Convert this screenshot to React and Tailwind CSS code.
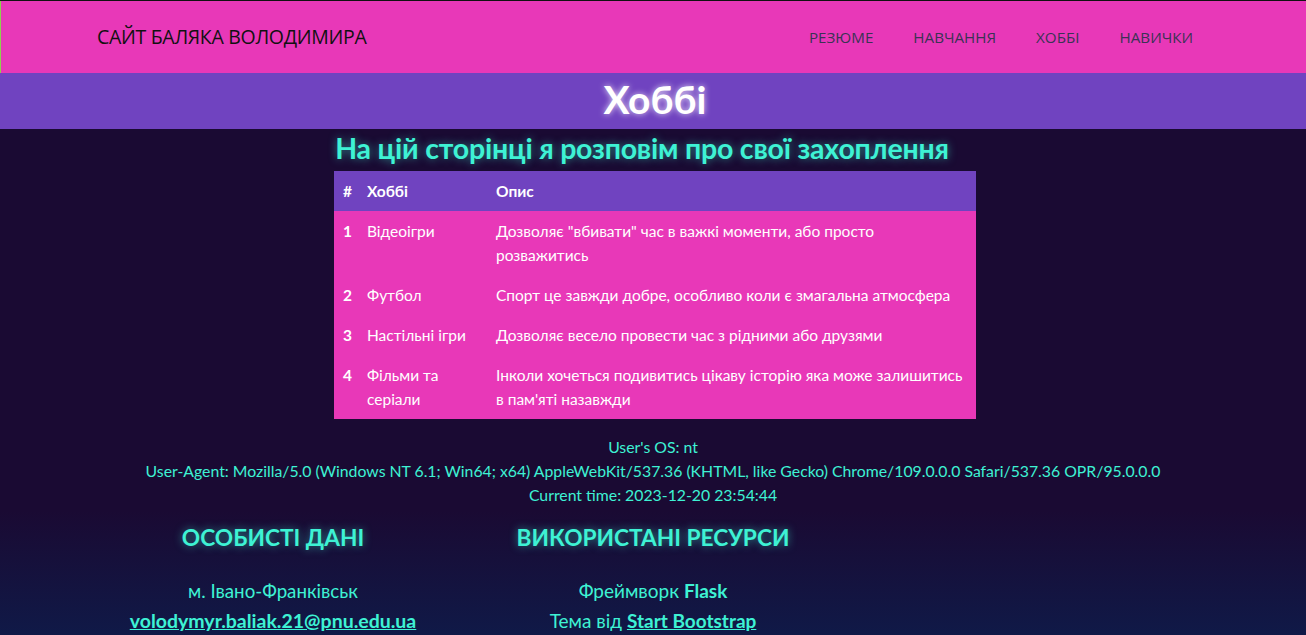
import React from 'react';

const hobbies = [
  { n: 1, name: 'Відеоігри', desc: 'Дозволяє "вбивати" час в важкі моменти, або просто розважитись' },
  { n: 2, name: 'Футбол', desc: 'Спорт це завжди добре, особливо коли є змагальна атмосфера' },
  { n: 3, name: 'Настільні ігри', desc: 'Дозволяє весело провести час з рідними або друзями' },
  { n: 4, name: 'Фільми та серіали', desc: 'Інколи хочеться подивитись цікаву історію яка може залишитись в пам\'яті назавжди' },
];

const navLinks = ['РЕЗЮМЕ', 'НАВЧАННЯ', 'ХОББІ', 'НАВИЧКИ'];

export default function App() {
  return (
    <div className="min-h-screen bg-[linear-gradient(to_bottom,#1a0a33_0px,#1a0a33_510px,#0c1f4f_680px)] font-['Lato',sans-serif] border-t border-[#111]">
      {/* Navbar */}
      <nav className="bg-[#e838b8] h-[72px] border-l border-[#8fd14f]">
        <div className="h-full pl-[96px] pr-[113px] flex items-center justify-between font-['Open_Sans',sans-serif]">
          <span className="text-[19.5px] text-[#111] tracking-[-0.3px]">САЙТ БАЛЯКА ВОЛОДИМИРА</span>
          <ul className="flex gap-10 text-[15.2px] text-[#3b3355]">
            {navLinks.map((l) => (
              <li key={l}>{l}</li>
            ))}
          </ul>
        </div>
      </nav>

      {/* Hero */}
      <header className="bg-[#7043c0] h-[56px] flex items-center justify-center">
        <h1 className="text-[39px] font-bold text-white [text-shadow:0_0_6px_rgba(255,255,255,0.8)] leading-none pl-1 pb-1">Хоббі</h1>
      </header>

      {/* Content */}
      <section className="flex flex-col items-center">
        <h2 className="mt-[1px] mr-[22px] text-[28.5px] font-bold text-[#3ef2d4] [text-shadow:0_0_8px_rgba(62,242,212,0.55)] leading-[36px] tracking-[-0.2px]">
          На цій сторінці я розповім про свої захоплення
        </h2>
        <table className="mt-[5px] ml-[4px] w-[642px] text-[15.5px] text-white leading-6 border-collapse">
          <thead>
            <tr className="bg-[#7043c0] text-left">
              <th className="w-[25px] pl-[9px] py-2 font-bold">#</th>
              <th className="w-[129px] pl-2 py-2 font-bold">Хоббі</th>
              <th className="pl-2 pr-[10px] py-2 font-bold">Опис</th>
            </tr>
          </thead>
          <tbody className="bg-[#e838b8]">
            {hobbies.map((h) => (
              <tr key={h.n} className="align-top">
                <td className="pl-[9px] py-2 font-bold">{h.n}</td>
                <td className="pl-2 py-2 pr-2">{h.name}</td>
                <td className="pl-2 pr-[10px] py-2">{h.desc}</td>
              </tr>
            ))}
          </tbody>
        </table>

        <div className="mt-[16px] text-center text-[15.8px] leading-6 text-[#3ef2d4]">
          <p>User's OS: nt</p>
          <p>User-Agent: Mozilla/5.0 (Windows NT 6.1; Win64; x64) AppleWebKit/537.36 (KHTML, like Gecko) Chrome/109.0.0.0 Safari/537.36 OPR/95.0.0.0</p>
          <p>Current time: 2023-12-20 23:54:44</p>
        </div>
      </section>

      {/* Footer */}
      <footer className="w-[1140px] mx-auto grid grid-cols-3 mt-[13px] text-center text-[#3ef2d4]">
        <div>
          <h4 className="text-[22.7px] font-bold leading-[36px] [text-shadow:0_0_8px_rgba(62,242,212,0.55)]">ОСОБИСТІ ДАНІ</h4>
          <p className="mt-[20px] text-[18.7px] leading-[30px]">м. Івано-Франківськ</p>
          <p className="text-[19.5px] leading-[30px]">
            <a className="underline font-bold" href="#">volodymyr.baliak.21@pnu.edu.ua</a>
          </p>
        </div>
        <div>
          <h4 className="text-[22.7px] font-bold leading-[36px] [text-shadow:0_0_8px_rgba(62,242,212,0.55)]">ВИКОРИСТАНІ РЕСУРСИ</h4>
          <p className="mt-[20px] text-[19px] leading-[30px]">Фреймворк <span className="font-bold">Flask</span></p>
          <p className="text-[19px] leading-[30px]">
            Тема від <a className="underline font-bold" href="#">Start Bootstrap</a>
          </p>
        </div>
        <div />
      </footer>
    </div>
  );
}
